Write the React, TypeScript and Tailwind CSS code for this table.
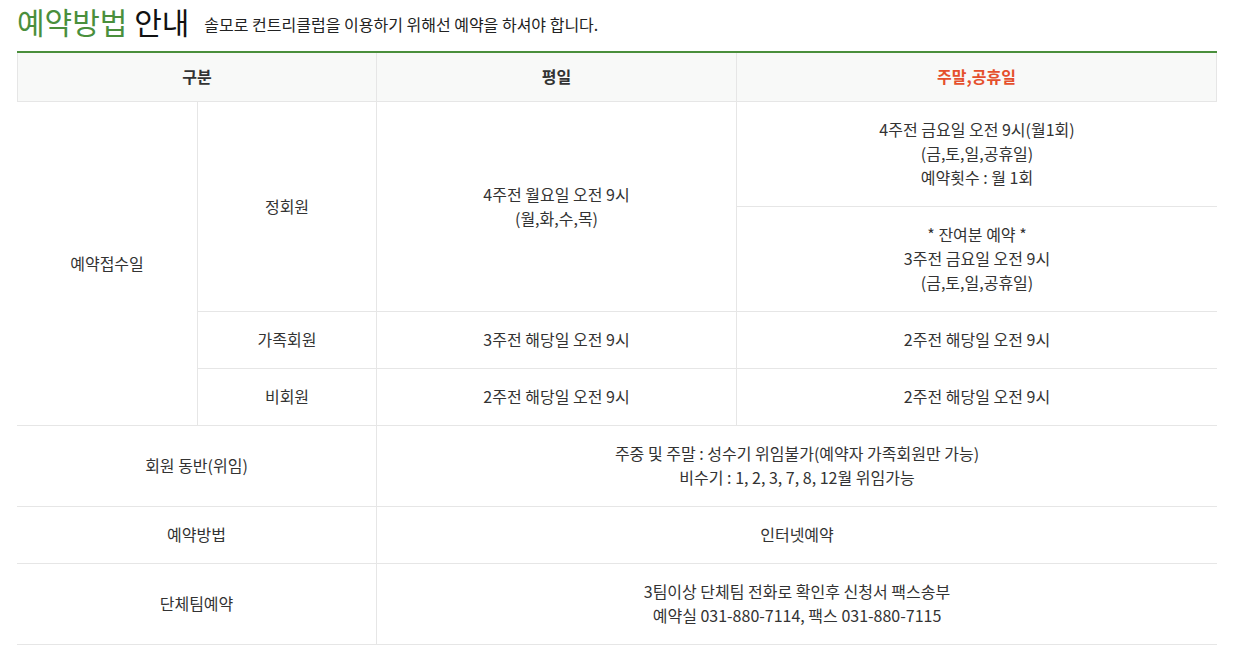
import React from "react";

const font = { fontFamily: '"Noto Sans CJK KR", "Noto Sans", sans-serif' };

const cell =
  "flex flex-col items-center justify-center text-center border-b border-[#e6e6e6] leading-6 pb-[2px]";

export default function App() {
  return (
    <div className="bg-white w-[1234px] h-[666px] text-[#333333] text-[16px]" style={font}>
      <div className="pl-[17px]">
        <div className="flex items-end h-[51px] pb-[15px]">
          <h2 className="text-[30px] leading-none font-normal">
            <span className="text-[#4a8f3c]">예약방법</span>
            <span className="text-[#111111]"> 안내</span>
          </h2>
          <p className="ml-[15px] text-[16px] leading-none text-[#222222] pb-[4px]">
            솔모로 컨트리클럽을 이용하기 위해선 예약을 하셔야 합니다.
          </p>
        </div>
        <div className="w-[1200px] border-t-2 border-[#4a8f3c] grid grid-cols-[181px_179px_360px_480px] grid-rows-[49px_105px_105px_57px_57px_81px_57px_81px]">
          {/* header */}
          <div className={`${cell} col-span-2 bg-[#f8f9f8] border-l border-r font-bold`}>구분</div>
          <div className={`${cell} bg-[#f8f9f8] border-r font-bold`}>평일</div>
          <div className={`${cell} bg-[#f8f9f8] border-r font-bold text-[#e5502d]`}>주말,공휴일</div>

          {/* 예약접수일 */}
          <div className={`${cell} row-span-4 border-r`}>예약접수일</div>
          <div className={`${cell} row-span-2 border-r`}>정회원</div>
          <div className={`${cell} row-span-2 border-r`}>
            <span>4주전 월요일 오전 9시</span>
            <span>(월,화,수,목)</span>
          </div>
          <div className={cell}>
            <span>4주전 금요일 오전 9시(월1회)</span>
            <span>(금,토,일,공휴일)</span>
            <span>예약횟수 : 월 1회</span>
          </div>
          <div className={cell}>
            <span>* 잔여분 예약 *</span>
            <span>3주전 금요일 오전 9시</span>
            <span>(금,토,일,공휴일)</span>
          </div>

          <div className={`${cell} border-r`}>가족회원</div>
          <div className={`${cell} border-r`}>3주전 해당일 오전 9시</div>
          <div className={cell}>2주전 해당일 오전 9시</div>

          <div className={`${cell} border-r`}>비회원</div>
          <div className={`${cell} border-r`}>2주전 해당일 오전 9시</div>
          <div className={cell}>2주전 해당일 오전 9시</div>

          <div className={`${cell} col-span-2 border-r`}>회원 동반(위임)</div>
          <div className={`${cell} col-span-2`}>
            <span>주중 및 주말 : 성수기 위임불가(예약자 가족회원만 가능)</span>
            <span>비수기 : 1, 2, 3, 7, 8, 12월 위임가능</span>
          </div>

          <div className={`${cell} col-span-2 border-r`}>예약방법</div>
          <div className={`${cell} col-span-2`}>인터넷예약</div>

          <div className={`${cell} col-span-2 border-r`}>단체팀예약</div>
          <div className={`${cell} col-span-2`}>
            <span>3팀이상 단체팀 전화로 확인후 신청서 팩스송부</span>
            <span>예약실 031-880-7114, 팩스 031-880-7115</span>
          </div>
        </div>
      </div>
    </div>
  );
}
